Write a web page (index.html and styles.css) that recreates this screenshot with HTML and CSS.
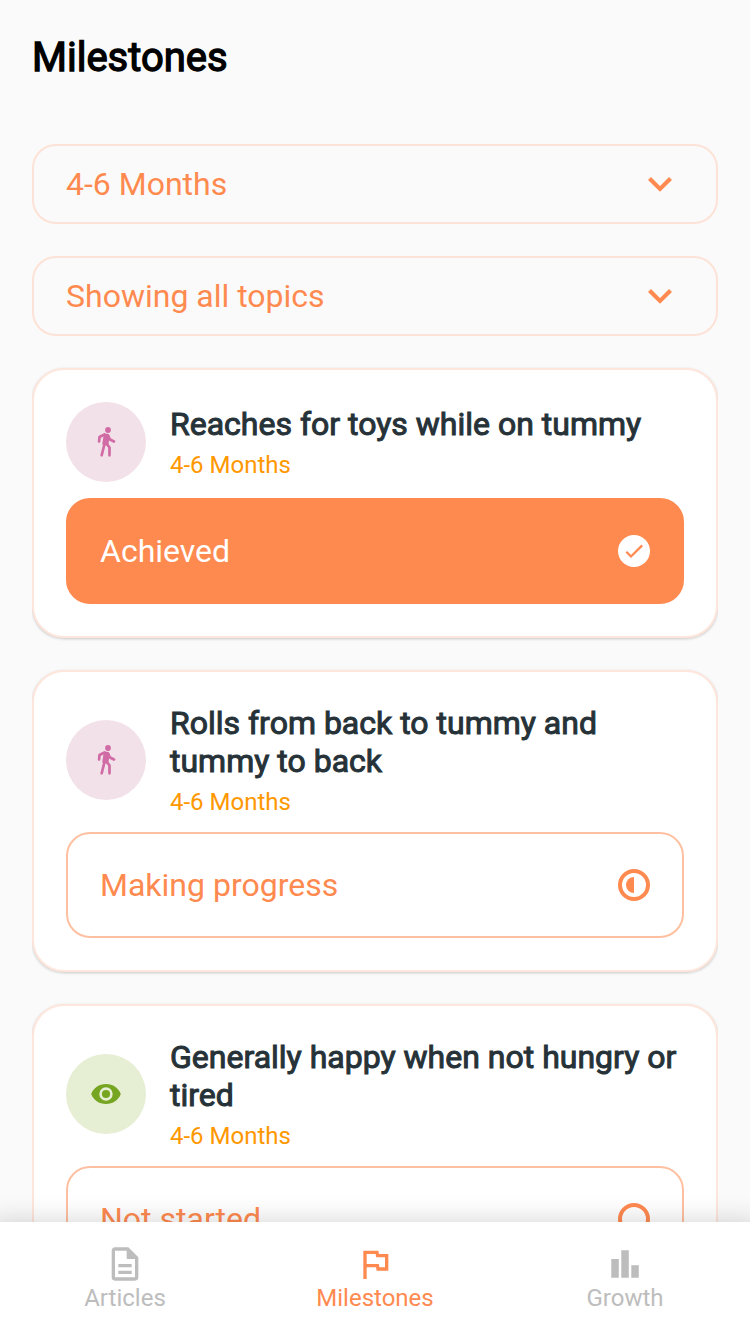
FILE: index.html
```html
<!DOCTYPE html>
<html lang="en">
<head>
<meta charset="utf-8">
<title>Milestones</title>
<link rel="stylesheet" href="styles.css">
</head>
<body>
<div class="app">
  <main class="content">
    <h1 class="page-title">Milestones</h1>
    <div class="select"><span>4-6 Months</span><svg class="chevron" viewBox="0 0 24 16"><path d="M1.500 2.500 12 12.900 22.500 2.500"/></svg></div>
    <div class="select"><span>Showing all topics</span><svg class="chevron" viewBox="0 0 24 16"><path d="M1.500 2.500 12 12.900 22.500 2.500"/></svg></div>

    <section class="card">
      <div class="summary">
        <div class="avatar movement"><svg class="topic-icon" viewBox="0 0 32 32"><circle cx="18" cy="4" r="2.900"/><path class="torso" d="M14.500 8.500h3l1.500 2-1.500 8.500-4.500-1z"/><path class="limb" d="m14.500 8.500-5 2.500-.4 4.500M18 9.500l2 4 4 2M14.500 18l-2.800 11.300M16.500 17.500l3 4v7.800"/></svg></div>
        <div class="details"><h2 class="card-title">Reaches for toys while on tummy</h2><p class="age">4-6 Months</p></div>
      </div>
      <div class="status achieved"><span>Achieved</span><svg class="status-icon" viewBox="0 0 32 32"><circle cx="16" cy="16" r="16" fill="#fff"/><path d="m8.300 16.800 4.700 4.700L24.200 10.400" fill="none" stroke="#ff8a50" stroke-width="2.300"/></svg></div>
    </section>

    <section class="card">
      <div class="summary">
        <div class="avatar movement"><svg class="topic-icon" viewBox="0 0 32 32"><circle cx="18" cy="4" r="2.900"/><path class="torso" d="M14.500 8.500h3l1.500 2-1.500 8.500-4.500-1z"/><path class="limb" d="m14.500 8.500-5 2.500-.4 4.500M18 9.500l2 4 4 2M14.500 18l-2.800 11.300M16.500 17.500l3 4v7.800"/></svg></div>
        <div class="details"><h2 class="card-title">Rolls from back to tummy and tummy to back</h2><p class="age">4-6 Months</p></div>
      </div>
      <div class="status"><span>Making progress</span><svg class="status-icon" viewBox="0 0 32 32"><circle cx="16" cy="16" r="14" fill="none" stroke="#ff8a50" stroke-width="4"/><path d="M16 8a8 8 0 0 0 0 16z" fill="#ff8a50"/></svg></div>
    </section>

    <section class="card">
      <div class="summary">
        <div class="avatar social"><svg class="topic-icon" viewBox="0 0 32 32"><path fill-rule="evenodd" d="M16 6C9 6 3.400 10 1.200 16 3.400 22 9 26 16 26s12.600-4 14.800-10C28.600 10 23 6 16 6zm0 3.300a6.700 6.700 0 1 1 0 13.400 6.700 6.700 0 0 1 0-13.400z"/><circle cx="16" cy="16" r="4.100"/></svg></div>
        <div class="details"><h2 class="card-title">Generally happy when not hungry or tired</h2><p class="age">4-6 Months</p></div>
      </div>
      <div class="status"><span>Not started</span><svg class="status-icon" viewBox="0 0 32 32"><circle cx="16" cy="16" r="14" fill="none" stroke="#ff8a50" stroke-width="4"/></svg></div>
    </section>
  </main>
  <nav class="tabs">
    <a class="tab"><svg class="tab-icon" viewBox="0 0 24 24"><path fill-rule="evenodd" d="M6 2h8l6 6v12a2 2 0 0 1-2 2H6a2 2 0 0 1-2-2V4c0-1.100.9-2 2-2zm0 2v16h12V9h-5V4zm2 8h8v2H8zm0 4h8v2H8z"/></svg><span>Articles</span></a>
    <a class="tab active"><svg class="tab-icon" viewBox="0 0 24 24"><path fill-rule="evenodd" d="M14.400 6 14 4H5v17h2v-7h5.600l.4 2h7V6zM18 14h-3.360l-.4-2H7V6h5.360l.4 2H18z"/></svg><span>Milestones</span></a>
    <a class="tab"><svg class="tab-icon" viewBox="0 0 40 40"><path d="M6.300 15h7.500v18.700H6.300zM16.300 6.300h7.500v27.400h-7.500zM26.300 21.300h7.500v12.400h-7.500z"/></svg><span>Growth</span></a>
  </nav>
</div>
</body>
</html>
```
FILE: styles.css
```css
* { box-sizing: border-box; }
body { margin: 0; background: #fafafa; font-family: Roboto, sans-serif; }
svg { display: block; flex: none; }
.app { height: 1333px; display: flex; flex-direction: column; overflow: hidden; }
.content { flex: 1; min-height: 0; overflow: hidden; padding: 34px 32px 0; display: flex; flex-direction: column; }
.content > * { flex: none; }
.page-title { margin: 0 0 62px; font-size: 40px; line-height: 48px; font-weight: 400; color: #000; -webkit-text-stroke: 1.3px #000; }
.select { height: 80px; margin-bottom: 32px; padding: 0 44px 0 32px; display: flex; align-items: center; justify-content: space-between; border: 2px solid #fde2d7; border-radius: 24px; color: #ff8a50; font-size: 32px; }
.chevron { width: 24px; height: 16px; fill: none; stroke: currentColor; stroke-width: 4.2; }
.card { margin-bottom: 32px; padding: 32px; border: 2px solid #ffe6dc; border-radius: 32px; background: #fff; box-shadow: 0 1px 3px rgba(0, 0, 0, .2); clip-path: inset(-8px 0); }
.summary { min-height: 80px; margin-bottom: 16px; display: flex; align-items: center; gap: 24px; }
.avatar { flex: none; width: 80px; height: 80px; border-radius: 50%; display: grid; place-items: center; }
.movement { background: #f2e1e8; color: #d16ba5; }
.social { background: #e6eed3; color: #76a521; }
.topic-icon { width: 32px; height: 32px; fill: currentColor; }
.torso { stroke: currentColor; stroke-width: 1.5; stroke-linejoin: round; }
.limb { fill: none; stroke: currentColor; stroke-width: 2.7; stroke-linecap: round; stroke-linejoin: round; }
.card-title { margin: 0 0 8px; font-size: 32px; line-height: 38px; font-weight: 400; color: #263238; -webkit-text-stroke: 1px #263238; }
.age { margin: 0; font-size: 24px; line-height: 28px; color: #ff9800; }
.status { height: 106px; padding: 0 32px; display: flex; align-items: center; justify-content: space-between; border: 2px solid #ffc0a1; border-radius: 24px; color: #ff8a50; font-size: 32px; }
.achieved { border-color: #ff8a50; background: #ff8a50; color: #fff; }
.status-icon { width: 32px; height: 32px; }
.tabs { position: relative; flex: none; height: 111px; padding-top: 22px; display: grid; grid-template-columns: repeat(3, 1fr); background: #fff; box-shadow: 0 10px 26px 10px rgba(0, 0, 0, .18); }
.tab { display: flex; flex-direction: column; align-items: center; color: #bdbdbd; font-size: 24px; line-height: 28px; }
.tab-icon { width: 40px; height: 40px; fill: currentColor; }
.active { color: #ff8a50; }
```
